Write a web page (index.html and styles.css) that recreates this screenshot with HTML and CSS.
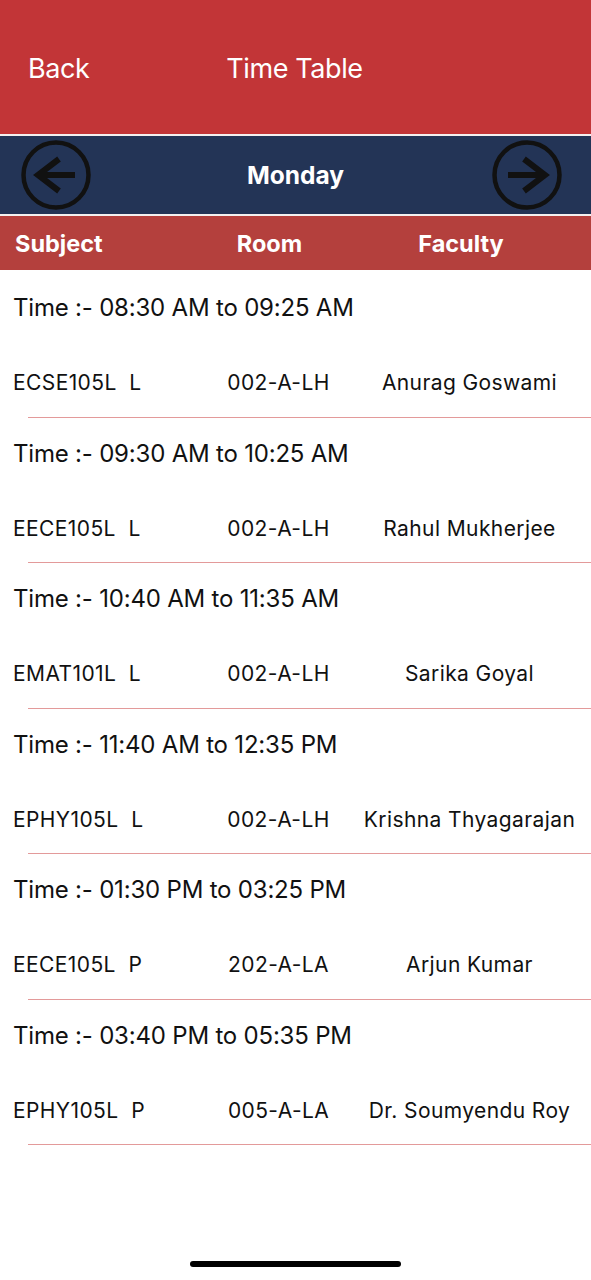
FILE: index.html
```html
<!DOCTYPE html>
<html>
<head>
<meta charset="utf-8">
<link rel="stylesheet" href="styles.css">
</head>
<body>
<div class="screen">
  <header class="topbar">
    <span class="back">Back</span>
    <span class="title">Time Table</span>
  </header>
  <div class="daybar">
    <svg class="nav-icon prev" viewBox="0 0 70 70" width="70" height="70">
      <circle cx="35" cy="35" r="32.5" fill="none" stroke="#111" stroke-width="4.5"/>
      <path d="M54 35 H17 M38 19 L17 35 L38 51" fill="none" stroke="#111" stroke-width="6" stroke-linejoin="miter"/>
    </svg>
    <span class="day">Monday</span>
    <svg class="nav-icon next" viewBox="0 0 70 70" width="70" height="70">
      <circle cx="35" cy="35" r="32.5" fill="none" stroke="#111" stroke-width="4.5"/>
      <path d="M16 35 H53 M32 19 L53 35 L32 51" fill="none" stroke="#111" stroke-width="6" stroke-linejoin="miter"/>
    </svg>
  </div>
  <div class="colhead">
    <span class="h-subject">Subject</span>
    <span class="h-room">Room</span>
    <span class="h-faculty">Faculty</span>
  </div>
  <div class="list">
    <div class="item">
      <div class="time">Time :- 08:30 AM to 09:25 AM</div>
      <div class="data"><span class="subj">ECSE105L&nbsp;&nbsp;L</span><span class="room">002-A-LH</span><span class="fac">Anurag Goswami</span></div>
    </div>
    <div class="item">
      <div class="time">Time :- 09:30 AM to 10:25 AM</div>
      <div class="data"><span class="subj">EECE105L&nbsp;&nbsp;L</span><span class="room">002-A-LH</span><span class="fac">Rahul Mukherjee</span></div>
    </div>
    <div class="item">
      <div class="time">Time :- 10:40 AM to 11:35 AM</div>
      <div class="data"><span class="subj">EMAT101L&nbsp;&nbsp;L</span><span class="room">002-A-LH</span><span class="fac">Sarika Goyal</span></div>
    </div>
    <div class="item">
      <div class="time">Time :- 11:40 AM to 12:35 PM</div>
      <div class="data"><span class="subj">EPHY105L&nbsp;&nbsp;L</span><span class="room">002-A-LH</span><span class="fac">Krishna Thyagarajan</span></div>
    </div>
    <div class="item">
      <div class="time">Time :- 01:30 PM to 03:25 PM</div>
      <div class="data"><span class="subj">EECE105L&nbsp;&nbsp;P</span><span class="room">202-A-LA</span><span class="fac">Arjun Kumar</span></div>
    </div>
    <div class="item">
      <div class="time">Time :- 03:40 PM to 05:35 PM</div>
      <div class="data"><span class="subj">EPHY105L&nbsp;&nbsp;P</span><span class="room">005-A-LA</span><span class="fac">Dr. Soumyendu Roy</span></div>
    </div>
  </div>
  <div class="spacer"></div>
  <div class="home-bar"><span class="home-indicator"></span></div>
</div>
</body>
</html>
```

FILE: styles.css
```css
* { box-sizing: border-box; }
html, body { margin: 0; padding: 0; background: #fff; }
body { font-family: Inter, "Liberation Sans", Arial, sans-serif; color: #111; }

.screen {
  width: 591px;
  height: 1280px;
  display: flex;
  flex-direction: column;
  background: #fff;
}

.topbar {
  height: 136px;
  background: #c23537;
  color: #fff;
  display: flex;
  align-items: center;
  position: relative;
  padding-left: 28px;
  padding-top: 2px;
  border-bottom: 2px solid #f4f0f0;
}
.back { font-size: 27px; letter-spacing: -0.4px; }
.title {
  position: absolute;
  left: 0; right: 0;
  top: 52px;
  text-align: center;
  font-size: 27px;
  letter-spacing: -0.4px;
  padding-right: 2px;
}

.daybar {
  height: 80px;
  background: #233456;
  border-bottom: 2px solid #f4f0f0;
  display: grid;
  grid-template-columns: 1fr auto 1fr;
  align-items: center;
  padding: 0 29px 0 21px;
}
.nav-icon { display: block; }
.nav-icon.prev { justify-self: start; }
.nav-icon.next { justify-self: end; }
.day {
  color: #fff;
  font-weight: bold;
  font-size: 24.5px;
  padding-left: 8px;
}

.colhead {
  height: 54px;
  background: #b4403d;
  color: #fff;
  font-weight: bold;
  font-size: 23.5px;
  display: grid;
  grid-template-columns: 180px 179px 204px;
  align-items: center;
}
.h-subject { padding-left: 15px; }
.h-room { text-align: center; }
.h-faculty { text-align: center; }

.list { display: flex; flex-direction: column; padding-top: 2px; }
.item {
  height: 146px;
  position: relative;
}
.item:nth-child(even) { height: 145px; }
.item::after {
  content: "";
  position: absolute;
  left: 28px; right: 0; bottom: 0;
  height: 1px;
  background: #e39a9a;
}
.time {
  height: 74px;
  line-height: 72px;
  padding-left: 13px;
  font-size: 24px;
  letter-spacing: -0.2px;
}
.data {
  height: 70px;
  line-height: 74px;
  font-size: 21px;
  letter-spacing: 0.4px;
  display: grid;
  grid-template-columns: 200px 157px 225px;
}
.subj { padding-left: 13px; white-space: nowrap; }
.room { text-align: center; white-space: nowrap; }
.fac { text-align: center; white-space: nowrap; }

.spacer { flex: 1; }
.home-bar {
  height: 19px;
  display: flex;
  justify-content: center;
}
.home-indicator {
  width: 211px;
  height: 6px;
  border-radius: 3px;
  background: #000;
}
```
